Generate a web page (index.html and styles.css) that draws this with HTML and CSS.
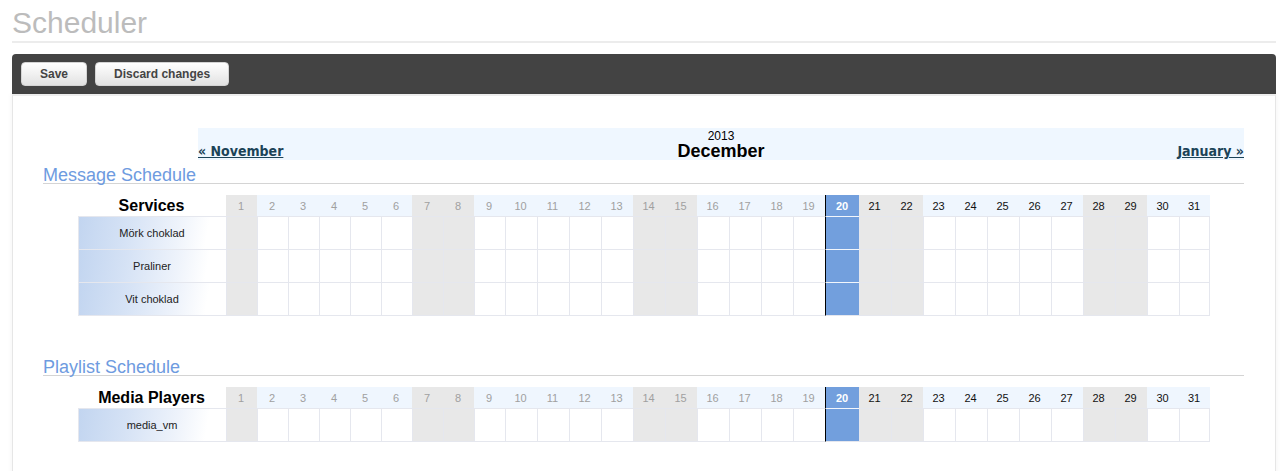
FILE: index.html
```html
<!DOCTYPE html>
<html lang="sv">
<head>
    <meta charset="UTF-8">
    <meta name="viewport" content="width=device-width, initial-scale=1.0">
    <title>Scheduler</title>
    <link rel="stylesheet" href="styles.css">
</head>
<body>
    <div class="page">
        <h1 class="page-title">Scheduler</h1>

        <div class="toolbar">
            <button class="btn">Save</button>
            <button class="btn">Discard changes</button>
        </div>

        <div class="panel">
            <div class="month-nav">
                <a href="#" class="month-link">&laquo; November</a>
                <div class="month-title">
                    <span class="year">2013</span>
                    <span class="month">December</span>
                </div>
                <a href="#" class="month-link next">January &raquo;</a>
            </div>

            <h2 class="section-title">Message Schedule</h2>
            <table class="schedule" data-title="Services" data-rows="Mörk choklad|Praliner|Vit choklad"></table>

            <h2 class="section-title">Playlist Schedule</h2>
            <table class="schedule" data-title="Media Players" data-rows="media_vm"></table>
        </div>
    </div>

<script>
const year = 2013;
const month = 11; // december
const today = 20;
const daysInMonth = new Date(year, month + 1, 0).getDate();

function colClass(day) {
    if (day === today) return 'col-today';
    if (day < 10 || day === daysInMonth) return 'col-narrow';
    return 'col-wide';
}

function dayClass(day) {
    const weekday = new Date(year, month, day).getDay();
    let cls = 'day';
    if (weekday === 0 || weekday === 6) cls += ' weekend';
    if (day < today) cls += ' past';
    if (day === today) cls += ' today';
    return cls;
}

document.querySelectorAll('.schedule').forEach(table => {
    const rows = table.dataset.rows.split('|');
    let cols = '<col class="col-label">';
    let head = `<th class="label">${table.dataset.title}</th>`;
    for (let day = 1; day <= daysInMonth; day++) {
        cols += `<col class="${colClass(day)}">`;
        head += `<th class="${dayClass(day)}">${day}</th>`;
    }
    let body = '';
    rows.forEach(name => {
        body += `<tr><td class="label">${name}</td>`;
        for (let day = 1; day <= daysInMonth; day++) {
            body += `<td class="${dayClass(day)}"></td>`;
        }
        body += '</tr>';
    });
    table.innerHTML = `<colgroup>${cols}</colgroup><thead><tr>${head}</tr></thead><tbody>${body}</tbody>`;
});
</script>
</body>
</html>
```

FILE: styles.css
```css
body {
    margin: 0;
    font-family: "Liberation Sans", Arial, sans-serif;
    background-color: #fff;
}

.page {
    margin: 0 8px 0 12px;
}

.page-title {
    margin: 0;
    padding-top: 5px;
    font-size: 30px;
    line-height: 36px;
    font-weight: normal;
    color: #bcbcbc;
    border-bottom: 2px solid #ececec;
}

.toolbar {
    margin-top: 11px;
    height: 40px;
    box-sizing: border-box;
    padding: 8px 9px;
    display: flex;
    gap: 8px;
    background-color: #434343;
    border-radius: 4px 4px 0 0;
}

.btn {
    height: 24px;
    min-width: 66px;
    padding: 0 18px;
    border: 1px solid #d4d4d4;
    border-radius: 4px;
    background: linear-gradient(#ffffff, #e2e2e2);
    font-family: inherit;
    font-size: 12px;
    font-weight: bold;
    color: #444;
    cursor: pointer;
}

.panel {
    border: 1px solid #e6e6e6;
    border-top: 2px solid #ededed;
    padding: 32px 31px 40px 30px;
    box-shadow: 0 0 6px rgba(0, 0, 0, 0.05);
}

/* month navigation */

.month-nav {
    margin-left: 155px;
    height: 32px;
    display: grid;
    grid-template-columns: 1fr auto 1fr;
    align-items: end;
    background-color: #eff7ff;
}

.month-title {
    display: flex;
    flex-direction: column;
    align-items: center;
    color: #000;
}

.year {
    font-size: 12px;
    line-height: 14px;
    padding-top: 1px;
}

.month {
    font-size: 18px;
    line-height: 17px;
    font-weight: bold;
}

.month-link {
    font-family: "DejaVu Sans Condensed", "DejaVu Sans", sans-serif;
    font-size: 14px;
    line-height: 17px;
    font-weight: bold;
    color: #1b4358;
}

.month-link.next {
    justify-self: end;
}

.section-title {
    margin: 4px 0 11px;
    padding-top: 3px;
    font-size: 18px;
    line-height: 16px;
    font-weight: normal;
    color: #6e9be0;
    border-bottom: 1px solid #d4d4d4;
}

.schedule + .section-title {
    margin-top: 40px;
}

/* schedule grid */

.schedule {
    margin: 0 auto;
    width: 1132px;
    table-layout: fixed;
    border-collapse: separate;
    border-spacing: 0;
    font-size: 11px;
}

.col-label {
    width: 148px;
}

.col-narrow {
    width: 31px;
}

.col-wide {
    width: 32px;
}

.col-today {
    width: 34px;
}

.schedule th,
.schedule td {
    padding: 0;
    text-align: center;
    vertical-align: middle;
    box-sizing: border-box;
}

.schedule th {
    height: 21px;
    font-weight: normal;
    color: #111;
    background-color: #eff6fe;
}

.schedule th.label {
    background-color: #fff;
    font-size: 16px;
    font-weight: bold;
    color: #000;
}

.schedule td {
    height: 33px;
    border-top: 1px solid #e5e7ee;
    border-left: 1px solid #e5e7ee;
    background-color: #fff;
}

.schedule tr:last-child td {
    height: 34px;
    border-bottom: 1px solid #e5e7ee;
}

.schedule td:last-child {
    border-right: 1px solid #e5e7ee;
}

.schedule td.label {
    color: #222;
    background: linear-gradient(100deg, #c2d5f0 0%, #d5e2f5 32%, #eef3fb 66%, #fff 86%);
}

.schedule .weekend,
.schedule td.weekend {
    background-color: #e8e8e8;
}

.schedule th.past {
    color: #a0a0a0;
}

.schedule th.today {
    background-color: #729fdd;
    color: #fff;
    font-weight: bold;
    border-left: 1px solid #000;
}

.schedule td.today {
    background-color: #729fdd;
    border-left: 1px solid #000;
    border-top-color: #f2f6fc;
}
```
